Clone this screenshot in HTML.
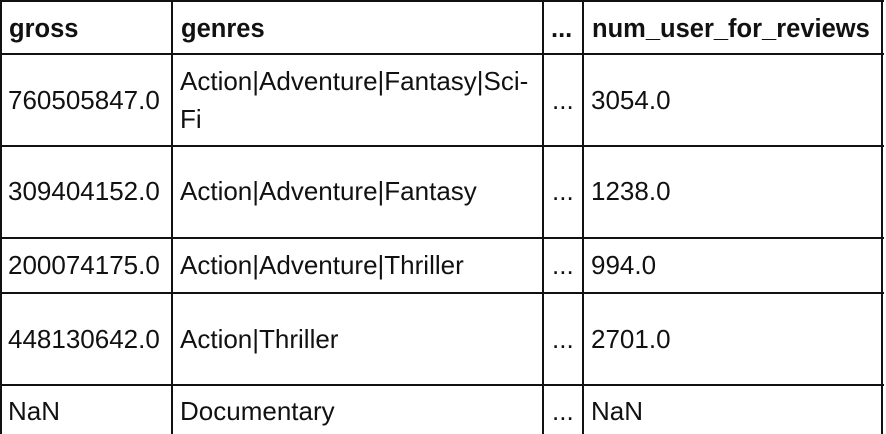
<!DOCTYPE html>
<html><head><style>
body{margin:0;width:886px;height:434px;background:#fff;position:relative;overflow:hidden;font-family:"Liberation Sans",Arial,sans-serif;font-size:26px;color:#111}
.h{position:absolute;left:0;width:884px;height:2px;background:#111}
.v{position:absolute;top:0;height:434px;width:2px;background:#111}
.t{position:absolute;white-space:nowrap;line-height:30px}
.b{font-weight:bold;font-size:25.5px}
</style></head><body>
<div class="h" style="top:0"></div>
<div class="h" style="top:53px"></div>
<div class="h" style="top:145px"></div>
<div class="h" style="top:237px"></div>
<div class="h" style="top:292px"></div>
<div class="h" style="top:384px"></div>
<div class="v" style="left:0"></div>
<div class="v" style="left:171px"></div>
<div class="v" style="left:542px"></div>
<div class="v" style="left:582px"></div>
<div class="v" style="left:881px"></div>

<div class="t b" style="left:9px;top:14px">gross</div>
<div class="t b" style="left:181px;top:14px">genres</div>
<div class="t b" style="left:551px;top:14px">...</div>
<div class="t b" style="left:592px;top:14px">num_user_for_reviews</div>

<div class="t" style="left:8px;top:85px">760505847.0</div>
<div class="t" style="left:180px;top:66px">Action|Adventure|Fantasy|Sci-</div>
<div class="t" style="left:180px;top:104px">Fi</div>
<div class="t" style="left:552px;top:85px">...</div>
<div class="t" style="left:591px;top:85px">3054.0</div>

<div class="t" style="left:8px;top:176px">309404152.0</div>
<div class="t" style="left:180px;top:176px">Action|Adventure|Fantasy</div>
<div class="t" style="left:552px;top:176px">...</div>
<div class="t" style="left:591px;top:176px">1238.0</div>

<div class="t" style="left:8px;top:250px">200074175.0</div>
<div class="t" style="left:180px;top:250px">Action|Adventure|Thriller</div>
<div class="t" style="left:552px;top:250px">...</div>
<div class="t" style="left:591px;top:250px">994.0</div>

<div class="t" style="left:8px;top:324px">448130642.0</div>
<div class="t" style="left:180px;top:324px">Action|Thriller</div>
<div class="t" style="left:552px;top:324px">...</div>
<div class="t" style="left:591px;top:324px">2701.0</div>

<div class="t" style="left:8px;top:396px">NaN</div>
<div class="t" style="left:180px;top:396px">Documentary</div>
<div class="t" style="left:552px;top:396px">...</div>
<div class="t" style="left:591px;top:396px">NaN</div>
</body></html>
